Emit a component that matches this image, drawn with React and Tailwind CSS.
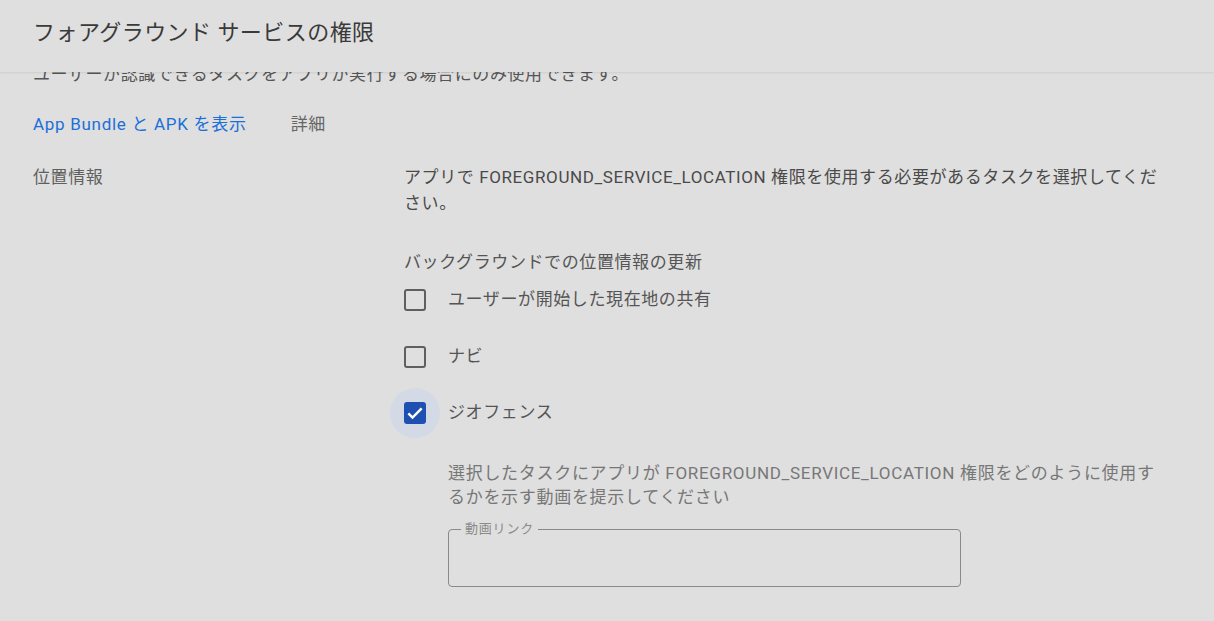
import React from 'react';

const font = { fontFamily: 'Roboto, "Noto Sans CJK JP", sans-serif' };

function Checkbox({ checked }) {
  return (
    <div
      className={`flex h-[50px] w-[50px] shrink-0 items-center justify-center rounded-full ${
        checked ? 'bg-[#d3dae6]' : ''
      }`}
    >
      {checked ? (
        <div className="flex h-[22px] w-[22px] items-center justify-center rounded-[3px] bg-[#1d50b0]">
          <svg width="20" height="20" viewBox="0 0 24 24" fill="none">
            <path d="M4 12.5l5 5L20 6.5" stroke="#fff" strokeWidth="3" />
          </svg>
        </div>
      ) : (
        <div className="h-[22px] w-[22px] rounded-[3px] border-[2.5px] border-[#5f5f5f]" />
      )}
    </div>
  );
}

function Option({ label, checked }) {
  return (
    <div className="-ml-[14px] flex h-[50px] items-center gap-[8px]">
      <Checkbox checked={checked} />
      <span className="text-[17px] tracking-[0.6px] text-[#555]">{label}</span>
    </div>
  );
}

export default function App() {
  return (
    <div className="flex h-[621px] w-full flex-col overflow-hidden bg-[#dfdfdf]" style={font}>
      {/* header */}
      <header className="relative z-10 flex h-[72px] shrink-0 items-center bg-[#dfdfdf] pb-[8px] pl-[33px] shadow-[0_1px_2px_rgba(0,0,0,0.08)]">
        <h1 className="text-[22px] font-normal tracking-[0.45px] text-[#3a3a3a]">フォアグラウンド サービスの権限</h1>
      </header>

      <main className="relative z-0 -mt-[11px] flex flex-col tracking-[0.6px]">
        <p className="pl-[33px] text-[17px] leading-[26px] text-[#555]">
          ユーザーが認識できるタスクをアプリが実行する場合にのみ使用できます。
        </p>

        <div className="mt-[24px] flex items-center gap-[44px] pl-[33px] text-[17px] leading-[26px]">
          <a className="tracking-[0.7px] text-[#1b6fd9]">App Bundle と APK を表示</a>
          <span className="text-[#666]">詳細</span>
        </div>

        <div className="mt-[27px] grid grid-cols-[371px_1fr] pl-[33px]">
          <div className="text-[17px] leading-[26px] text-[#5f5f5f]">位置情報</div>

          <div className="flex flex-col pr-[10px]">
            <p className="text-[17px] leading-[26px] text-[#4a4a4a]">
              アプリで FOREGROUND_SERVICE_LOCATION 権限を使用する必要があるタスクを選択してくだ
              <br />
              さい。
            </p>

            <p className="mt-[33px] text-[17px] leading-[26px] text-[#555]">バックグラウンドでの位置情報の更新</p>

            <div className="flex flex-col gap-[6.5px]">
              <Option label="ユーザーが開始した現在地の共有" />
              <Option label="ナビ" />
              <Option label="ジオフェンス" checked />
            </div>

            <div className="ml-[44px] mt-[23px] flex flex-col">
              <p className="text-[17px] leading-[24px] tracking-[0.7px] text-[#777]">
                選択したタスクにアプリが FOREGROUND_SERVICE_LOCATION 権限をどのように使用す
                <br />
                るかを示す動画を提示してください
              </p>

              <fieldset className="mt-[14px] h-[64px] w-[513px] rounded-[4px] border border-[#8a8a8a] px-[12px]">
                <legend className="px-[4px] text-[13px] leading-[12px] tracking-[0.8px] text-[#8a8a8a]">動画リンク</legend>
              </fieldset>
            </div>
          </div>
        </div>
      </main>
    </div>
  );
}
